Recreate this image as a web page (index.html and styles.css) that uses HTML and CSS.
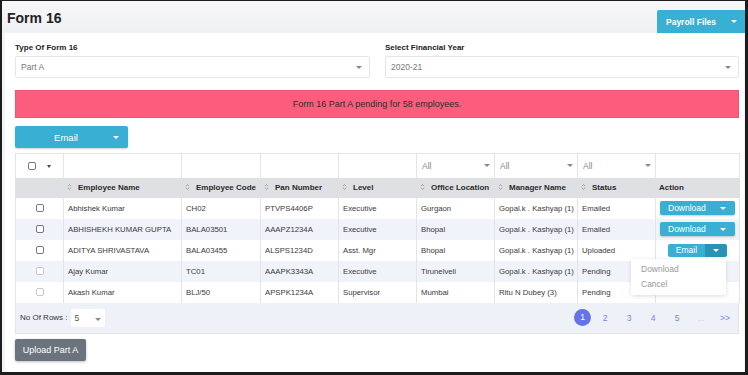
FILE: index.html
```html
<!DOCTYPE html>
<html lang="en">
<head>
  <meta charset="UTF-8">
  <meta name="viewport" content="width=device-width, initial-scale=1.0">
  <title>Form 16</title>
  <link rel="stylesheet" href="styles.css">
</head>
<body>
  <div class="frame">
    <header class="page-head">
      <h1>Form 16</h1>
      <div class="btn btn-info payroll"><span>Payroll Files</span><i class="caret white"></i></div>
    </header>

    <section class="card">
      <div class="filters">
        <div class="field">
          <label>Type Of Form 16</label>
          <div class="select"><span>Part A</span><i class="caret"></i></div>
        </div>
        <div class="field">
          <label>Select Financial Year</label>
          <div class="select"><span>2020-21</span><i class="caret"></i></div>
        </div>
      </div>

      <div class="alert">Form 16 Part A pending for 58 employees.</div>

      <div class="btn btn-info email-btn"><span>Email</span><i class="caret white"></i></div>

      <div class="grid-wrap">
        <table class="grid">
          <colgroup>
            <col style="width:48px">
            <col style="width:118px">
            <col style="width:79px">
            <col style="width:78px">
            <col style="width:78px">
            <col style="width:78px">
            <col style="width:83px">
            <col style="width:78px">
            <col style="width:84px">
          </colgroup>
          <thead>
            <tr class="filter-row">
              <th class="check-col"><span class="check"></span><i class="caret dark"></i></th>
              <th></th>
              <th></th>
              <th></th>
              <th></th>
              <th><div class="mini-select">All<i class="caret"></i></div></th>
              <th><div class="mini-select">All<i class="caret"></i></div></th>
              <th><div class="mini-select">All<i class="caret"></i></div></th>
              <th></th>
            </tr>
            <tr class="head-row">
              <th></th>
              <th><svg class="sort" viewBox="0 0 5 8"><path d="M1 3.2 2.5 1.5 4 3.2M1 4.8 2.5 6.5 4 4.8"/></svg>Employee Name</th>
              <th><svg class="sort" viewBox="0 0 5 8"><path d="M1 3.2 2.5 1.5 4 3.2M1 4.8 2.5 6.5 4 4.8"/></svg>Employee Code</th>
              <th><svg class="sort" viewBox="0 0 5 8"><path d="M1 3.2 2.5 1.5 4 3.2M1 4.8 2.5 6.5 4 4.8"/></svg>Pan Number</th>
              <th><svg class="sort" viewBox="0 0 5 8"><path d="M1 3.2 2.5 1.5 4 3.2M1 4.8 2.5 6.5 4 4.8"/></svg>Level</th>
              <th><svg class="sort" viewBox="0 0 5 8"><path d="M1 3.2 2.5 1.5 4 3.2M1 4.8 2.5 6.5 4 4.8"/></svg>Office Location</th>
              <th><svg class="sort" viewBox="0 0 5 8"><path d="M1 3.2 2.5 1.5 4 3.2M1 4.8 2.5 6.5 4 4.8"/></svg>Manager Name</th>
              <th><svg class="sort" viewBox="0 0 5 8"><path d="M1 3.2 2.5 1.5 4 3.2M1 4.8 2.5 6.5 4 4.8"/></svg>Status</th>
              <th class="action-head">Action</th>
            </tr>
          </thead>
          <tbody>
            <tr>
              <td class="check-col"><span class="check"></span></td>
              <td>Abhishek Kumar</td>
              <td>CH02</td>
              <td>PTVPS4406P</td>
              <td>Executive</td>
              <td>Gurgaon</td>
              <td>Gopal.k . Kashyap (1)</td>
              <td>Emailed</td>
              <td class="action"><div class="btn btn-info dl-btn"><span>Download</span><i class="caret white"></i></div></td>
            </tr>
            <tr>
              <td class="check-col"><span class="check"></span></td>
              <td>ABHISHEKH KUMAR GUPTA</td>
              <td>BALA03501</td>
              <td>AAAPZ1234A</td>
              <td>Executive</td>
              <td>Bhopal</td>
              <td>Gopal.k . Kashyap (1)</td>
              <td>Emailed</td>
              <td class="action"><div class="btn btn-info dl-btn"><span>Download</span><i class="caret white"></i></div></td>
            </tr>
            <tr>
              <td class="check-col"><span class="check"></span></td>
              <td>ADITYA SHRIVASTAVA</td>
              <td>BALA03455</td>
              <td>ALSPS1234D</td>
              <td>Asst. Mgr</td>
              <td>Bhopal</td>
              <td>Gopal.k . Kashyap (1)</td>
              <td>Uploaded</td>
              <td class="action">
                <div class="split">
                  <span class="split-main">Email</span><span class="split-toggle"><i class="caret white"></i></span>
                  <div class="menu">
                    <div class="menu-item">Download</div>
                    <div class="menu-item">Cancel</div>
                  </div>
                </div>
              </td>
            </tr>
            <tr>
              <td class="check-col"><span class="check disabled"></span></td>
              <td>Ajay Kumar</td>
              <td>TC01</td>
              <td>AAAPK3343A</td>
              <td>Executive</td>
              <td>Tirunelveli</td>
              <td>Gopal.k . Kashyap (1)</td>
              <td>Pending</td>
              <td class="action"></td>
            </tr>
            <tr>
              <td class="check-col"><span class="check disabled"></span></td>
              <td>Akash Kumar</td>
              <td>BLJ/50</td>
              <td>APSPK1234A</td>
              <td>Supervisor</td>
              <td>Mumbai</td>
              <td>Ritu N Dubey (3)</td>
              <td>Pending</td>
              <td class="action"></td>
            </tr>
          </tbody>
        </table>

        <div class="grid-foot">
          <div class="rows-pick">
            <span>No Of Rows :</span>
            <div class="row-select">5<i class="caret"></i></div>
          </div>
          <nav class="pager">
            <span class="page active">1</span>
            <span class="page">2</span>
            <span class="page">3</span>
            <span class="page">4</span>
            <span class="page">5</span>
            <span class="page muted">...</span>
            <span class="page">&gt;&gt;</span>
          </nav>
        </div>
      </div>

      <div class="btn btn-secondary upload-btn">Upload Part A</div>
    </section>
  </div>
</body>
</html>
```

FILE: styles.css
```css
* {
  margin: 0;
  padding: 0;
  box-sizing: border-box;
}

body {
  font-family: 'Liberation Sans', Arial, sans-serif;
  color: #333;
  background: #fff;
}

.frame {
  width: 748px;
  height: 375px;
  border-style: solid;
  border-color: #1c1c1c;
  border-width: 1px 3px 3px 2px;
  background: #f3f4f7;
  display: flex;
  flex-direction: column;
  overflow: hidden;
}

/* page header */
.page-head {
  height: 32px;
  display: flex;
  justify-content: space-between;
  align-items: flex-end;
  padding-left: 5px;
  background: linear-gradient(180deg, #f7f7f9, #eff0f3);
}

.page-head h1 {
  align-self: flex-start;
  margin-top: 9px;
  font-size: 14px;
  font-weight: 700;
  color: #222;
}

.caret {
  display: inline-block;
  width: 0;
  height: 0;
  border-left: 3px solid transparent;
  border-right: 3px solid transparent;
  border-top: 3px solid #8a8a8a;
}

.caret.white { border-top-color: #fff; }
.caret.dark { border-top-color: #444; border-left-width: 2px; border-right-width: 2px; }

.btn {
  display: flex;
  align-items: center;
  color: #fff;
  font-size: 9px;
  border-radius: 2px;
  box-shadow: 0 1px 2px rgba(0, 0, 0, 0.18);
}

.btn-info { background: #38afd3; }
.btn-secondary { background: #6b747c; }

.payroll {
  width: 88px;
  height: 23px;
  justify-content: space-between;
  padding: 0 8px 0 9px;
  font-size: 8.5px;
  font-weight: 700;
  border-radius: 2px 0 0 0;
  box-shadow: none;
}

/* card */
.card {
  flex: 1;
  margin: 0 1px 0 3px;
  background: #fff;
  padding: 10px 5px 0 10px;
}

.filters {
  display: grid;
  grid-template-columns: 355px 354px;
  gap: 15px;
}

.field label {
  display: block;
  font-size: 8px;
  font-weight: 700;
  line-height: 10px;
  color: #222;
  margin-bottom: 3px;
}

.select {
  height: 22px;
  border: 1px solid #e4e6ea;
  border-radius: 2px;
  display: flex;
  align-items: center;
  justify-content: space-between;
  padding: 0 7px 0 5px;
  font-size: 8.5px;
  color: #777;
}

.alert {
  margin-top: 12px;
  height: 28px;
  background: #fd5d7c;
  border: 1px solid #f4506f;
  display: flex;
  align-items: center;
  justify-content: center;
  font-size: 9px;
  color: #2c2c2c;
}

.email-btn {
  margin-top: 8px;
  width: 113px;
  height: 22px;
  padding: 0 9px 0 0;
  font-size: 9.5px;
}

.email-btn span {
  flex: 1;
  text-align: center;
  padding-left: 4px;
}

/* table */
.grid-wrap {
  margin-top: 5px;
}

.grid {
  width: 724px;
  table-layout: fixed;
  border-collapse: collapse;
  font-size: 7.75px;
}

.grid th,
.grid td {
  border-left: 1px solid #e2e4e8;
  border-right: 1px solid #e2e4e8;
  padding: 0 4px;
  text-align: left;
  white-space: nowrap;
  overflow: visible;
}

.filter-row th {
  height: 24px;
  border-top: 1px solid #e2e4e8;
  background: #fff;
  padding: 0 2px;
}

.check-col {
  text-align: center !important;
}

.filter-row .check-col .check {
  margin-right: 11px;
}

.check {
  display: inline-block;
  width: 8px;
  height: 8px;
  border: 1px solid #777;
  border-radius: 2px;
  background: #fff;
  vertical-align: middle;
}

.check.disabled {
  border-color: #c8c8c8;
}

.mini-select {
  display: flex;
  justify-content: space-between;
  align-items: center;
  padding: 0 2px 0 3px;
  font-size: 8.5px;
  font-weight: 400;
  color: #888;
}

.head-row th {
  height: 20px;
  background: #dfe0e4;
  border-color: #dfe0e4;
  font-size: 8px;
  font-weight: 700;
  color: #2a2a2a;
  padding-left: 3px;
}

.sort {
  width: 5px;
  height: 8px;
  margin: 0 6px 0 0;
  vertical-align: -1px;
  fill: none;
  stroke: #8a8a8a;
  stroke-width: 0.7;
}

.grid td {
  height: 21px;
  color: #3a3a3a;
}

.grid tbody tr:nth-child(even) td {
  background: #f1f3fa;
}

.grid td.action {
  padding: 0 4px;
  text-align: center;
}

.dl-btn {
  height: 14px;
  justify-content: space-between;
  padding: 0 9px 0 8px;
  font-size: 8.5px;
  box-shadow: 0 1px 2px rgba(0, 0, 0, 0.2);
}

.split {
  position: relative;
  display: inline-flex;
  height: 13px;
  vertical-align: middle;
}

.split-main {
  width: 37px;
  background: #38afd3;
  color: #fff;
  font-size: 8.5px;
  line-height: 13px;
  text-align: center;
  border-radius: 2px 0 0 2px;
}

.split-toggle {
  width: 22px;
  background: #2a93b5;
  display: flex;
  align-items: center;
  justify-content: center;
  border-radius: 0 2px 2px 0;
}

.menu {
  position: absolute;
  top: 15px;
  right: 1px;
  width: 95px;
  padding: 3px 0;
  background: #fff;
  border-radius: 2px;
  box-shadow: 0 1px 4px rgba(0, 0, 0, 0.14);
  text-align: left;
}

.menu-item {
  padding: 0 10px;
  line-height: 15px;
  font-size: 8.5px;
  color: #9a9a9a;
}

/* footer under the table */
.grid-foot {
  height: 31px;
  background: #eef1f8;
  border: 1px solid #e2e4e8;
  border-top: none;
  display: flex;
  align-items: center;
  justify-content: space-between;
  padding: 0 1px 0 4px;
  font-size: 8px;
  color: #333;
}

.rows-pick {
  display: flex;
  align-items: center;
  gap: 3px;
}

.row-select {
  width: 34px;
  height: 18px;
  background: #fff;
  border-radius: 2px;
  display: flex;
  align-items: center;
  justify-content: space-between;
  padding: 0 4px;
  font-size: 8.5px;
  color: #555;
}

.row-select .caret {
  margin-top: 4px;
}

.pager {
  display: flex;
  align-items: center;
}

.page {
  width: 24px;
  text-align: center;
  font-size: 8.5px;
  color: #7584e6;
}

.page.muted {
  color: #c9cde8;
}

.page.active {
  width: 17px;
  height: 17px;
  margin-right: 2px;
  line-height: 17px;
  border-radius: 50%;
  background: #6474e8;
  color: #fff;
}

.upload-btn {
  margin-top: 5px;
  width: 71px;
  height: 22px;
  justify-content: center;
  font-size: 9px;
  box-shadow: 0 1px 3px rgba(0, 0, 0, 0.25);
}
```
